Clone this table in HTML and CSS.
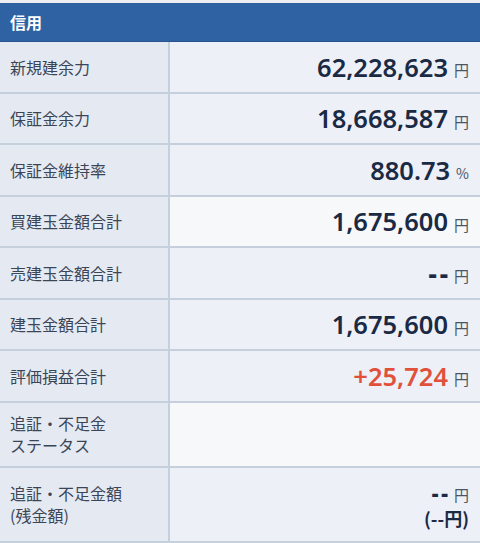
FILE: index.html
```html
<!DOCTYPE html>
<html lang="ja">
<head>
<meta charset="utf-8">
<link rel="stylesheet" href="styles.css">
</head>
<body>
<div class="topstrip"></div>
<div class="header">信用</div>
<div class="table">
  <div class="row"><div class="label">新規建余力</div><div class="value"><span class="num">62,228,623</span><span class="unit">円</span></div></div>
  <div class="row"><div class="label">保証金余力</div><div class="value"><span class="num">18,668,587</span><span class="unit">円</span></div></div>
  <div class="row"><div class="label">保証金維持率</div><div class="value"><span class="num">880.73</span><span class="unit pct">%</span></div></div>
  <div class="row alt"><div class="label">買建玉金額合計</div><div class="value"><span class="num">1,675,600</span><span class="unit">円</span></div></div>
  <div class="row"><div class="label">売建玉金額合計</div><div class="value"><span class="num dash">--</span><span class="unit">円</span></div></div>
  <div class="row"><div class="label">建玉金額合計</div><div class="value"><span class="num">1,675,600</span><span class="unit">円</span></div></div>
  <div class="row"><div class="label">評価損益合計</div><div class="value"><span class="num plus">+25,724</span><span class="unit">円</span></div></div>
  <div class="row alt tall"><div class="label">追証・不足金<br>ステータス</div><div class="value"></div></div>
  <div class="row taller"><div class="label">追証・不足金額<br>(残金額)</div><div class="value stack"><div class="line"><span class="num dash small">--</span><span class="unit">円</span></div><div class="line sub">(--円)</div></div></div>
</div>
</body>
</html>
```
FILE: styles.css
```css
html, body {
  margin: 0;
  padding: 0;
  background: #eef0f4;
  font-family: "Noto Sans CJK JP", "Noto Sans", sans-serif;
}
.topstrip {
  height: 3px;
  background: #eceef2;
}
.header {
  height: 38px;
  background: #2f62a3;
  border-bottom: 1px solid #27548e;
  color: #ffffff;
  font-weight: 700;
  font-size: 16px;
  display: flex;
  align-items: center;
  padding-left: 10px;
}
.row {
  display: grid;
  grid-template-columns: 170px 1fr;
  height: 49.5px;
  border-bottom: 2px solid #c6d0dc;
}
.row.tall { height: 63px; }
.row.taller { height: 73px; }
.label {
  background: #e5eaf2;
  border-right: 2px solid #c6d0dc;
  color: #3a4658;
  font-size: 16px;
  line-height: 22px;
  display: flex;
  align-items: center;
  padding-left: 10px;
}
.value {
  background: #edf0f7;
  display: flex;
  align-items: center;
  justify-content: flex-end;
  padding-right: 11px;
  gap: 6px;
}
.row.alt .value { background: #f7f8fa; }
.num {
  font-family: "Noto Sans", sans-serif;
  font-weight: 600;
  font-size: 25.5px;
  color: #1b2a44;
}
.num.plus { color: #e0503b; }
.num.dash {
  font-weight: 800;
  font-size: 26px;
  letter-spacing: 3px;
  margin-right: -3px;
}
.unit {
  font-size: 15px;
  color: #4b5564;
  padding-top: 6px;
}
.unit.pct { font-size: 14px; }
.value.stack {
  flex-direction: column;
  align-items: flex-end;
  justify-content: center;
  gap: 0;
  padding-top: 4px;
}
.line {
  display: flex;
  align-items: center;
  gap: 6px;
  height: 25px;
  line-height: 25px;
}
.line .unit { padding-top: 2px; }
.line .num.dash.small {
  font-size: 21px;
  font-weight: 900;
  letter-spacing: 3px;
}
.line.sub {
  font-weight: 700;
  font-size: 18px;
  color: #1b2a44;
}
```
